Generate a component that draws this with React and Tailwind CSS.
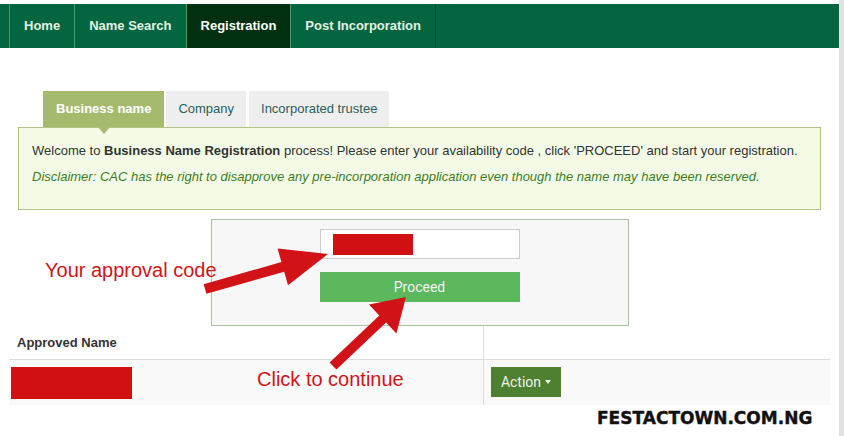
import React from "react";

const navItems = ["Home", "Name Search", "Registration", "Post Incorporation"];

export default function App() {
  return (
    <div
      className="relative flex w-[844px] h-[436px] overflow-hidden bg-white"
      style={{ fontFamily: '"Liberation Sans", Arial, sans-serif' }}
    >
      <div className="flex flex-col w-[839px] pt-[4px]">
        {/* Navbar */}
        <nav className="flex h-[44px] bg-[#036640] pl-[9px]">
          {navItems.map((item, i) => (
            <div
              key={item}
              className={`flex items-center px-[14px] text-[13px] font-bold border-l border-[#4f9a5e] ${
                item === "Registration" ? "bg-[#00300f] text-white" : "text-[#e3f1e3]"
              } ${i === navItems.length - 1 ? "border-r border-r-[#024a2c]" : ""}`}
            >
              {item}
            </div>
          ))}
        </nav>

        {/* Tabs + alert */}
        <div className="px-[18px] pt-[43px]">
          <div className="flex ml-[25px] h-[36px]">
            <div className="relative flex items-center px-[13px] bg-[#a6ba6e] text-white text-[13px] font-bold">
              Business name
              <div className="absolute left-[55px] top-[36px] w-0 h-0 border-l-[6px] border-r-[6px] border-t-[7px] border-l-transparent border-r-transparent border-t-[#a6ba6e] z-10" />
            </div>
            <div className="flex items-center px-[12px] ml-[2px] bg-[#eeeeee] text-[#2c5e5e] text-[13px]">
              Company
            </div>
            <div className="flex items-center px-[12px] ml-[3px] bg-[#eeeeee] text-[#2c5e5e] text-[13px]">
              Incorporated trustee
            </div>
          </div>
          <div className="border border-[#b3c387] bg-[#f3fae6] h-[83px] px-[13px] pt-[14px]">
            <p className="text-[13px] leading-[18px] text-[#333333]">
              Welcome to <b>Business Name Registration</b> process! Please enter your availability code , click
              'PROCEED' and start your registration.
            </p>
            <p className="mt-[8px] text-[13px] leading-[18px] italic text-[#3d7d24]">
              Disclaimer: CAC has the right to disapprove any pre-incorporation application even though the name may
              have been reserved.
            </p>
          </div>

          {/* Form box */}
          <div className="flex justify-center mt-[9px]">
            <div className="flex flex-col items-center w-[418px] h-[107px] bg-[#f7f7f7] border border-[#a9c2a2] pt-[9px]">
              <div className="w-[200px] h-[30px] bg-white border border-[#cccccc] pl-[12px] pt-[4px]">
                <div className="w-[80px] h-[21px] bg-[#d01012]" />
              </div>
              <div
                className="mt-[13px] w-[200px] h-[30px] bg-[#5cb85c] flex items-center justify-center text-[14px] text-[#f2f2f2]"
                style={{ fontFamily: "Roboto, sans-serif" }}
              >
                Proceed
              </div>
            </div>
          </div>
        </div>

        {/* Table */}
        <div className="px-[9px] w-full">
          <div className="flex h-[34px] border-b border-[#dddddd]">
            <div className="w-[474px] flex items-center pl-[8px] text-[13px] font-bold text-[#333333]">
              Approved Name
            </div>
            <div className="flex-1 border-l border-[#dddddd]" />
          </div>
          <div className="flex h-[45px] bg-[#f9f9f9]">
            <div className="w-[474px] pl-[2px] pt-[7px]">
              <div className="w-[121px] h-[32px] bg-[#d01012]" />
            </div>
            <div className="flex-1 border-l border-[#dddddd] pl-[7px] pt-[7px]">
              <div
                className="w-[70px] h-[30px] bg-[#4f7f30] flex items-center justify-center gap-[4px] text-[14px] text-[#eef5ea]"
                style={{ fontFamily: "Roboto, sans-serif" }}
              >
                Action
                <span className="w-0 h-0 border-l-[3px] border-r-[3px] border-t-[4px] border-l-transparent border-r-transparent border-t-[#eef5ea]" />
              </div>
            </div>
          </div>
        </div>
      </div>

      {/* Scrollbar strip */}
      <div className="w-[5px] h-full bg-[#e2e2e2]" />

      {/* Annotations overlay */}
      <svg className="absolute left-0 top-0 pointer-events-none" width="844" height="436" viewBox="0 0 844 436">
        <polygon
          fill="#d11317"
          points="203.6,284.2 281.4,262.1 277.6,248.6 328,254 288,285.2 284.2,271.7 206.4,293.8"
        />
        <polygon
          fill="#d11317"
          points="329.6,362.4 379.3,315.4 369,304.5 406,297 396.4,333.5 386.1,322.6 336.4,369.6"
        />
      </svg>
      <div className="absolute left-[45px] top-[258px] text-[20px] leading-[24px] text-[#d0141a]">
        Your approval code
      </div>
      <div className="absolute left-[257px] top-[367px] text-[20px] leading-[24px] text-[#d0141a]">
        Click to continue
      </div>
      <div
        className="absolute left-[597px] top-[407px] text-[17px] leading-[22px] font-bold text-[#111111]"
        style={{ fontFamily: '"DejaVu Sans", sans-serif', WebkitTextStroke: "0.4px #111111" }}
      >
        FESTACTOWN.COM.NG
      </div>
    </div>
  );
}
